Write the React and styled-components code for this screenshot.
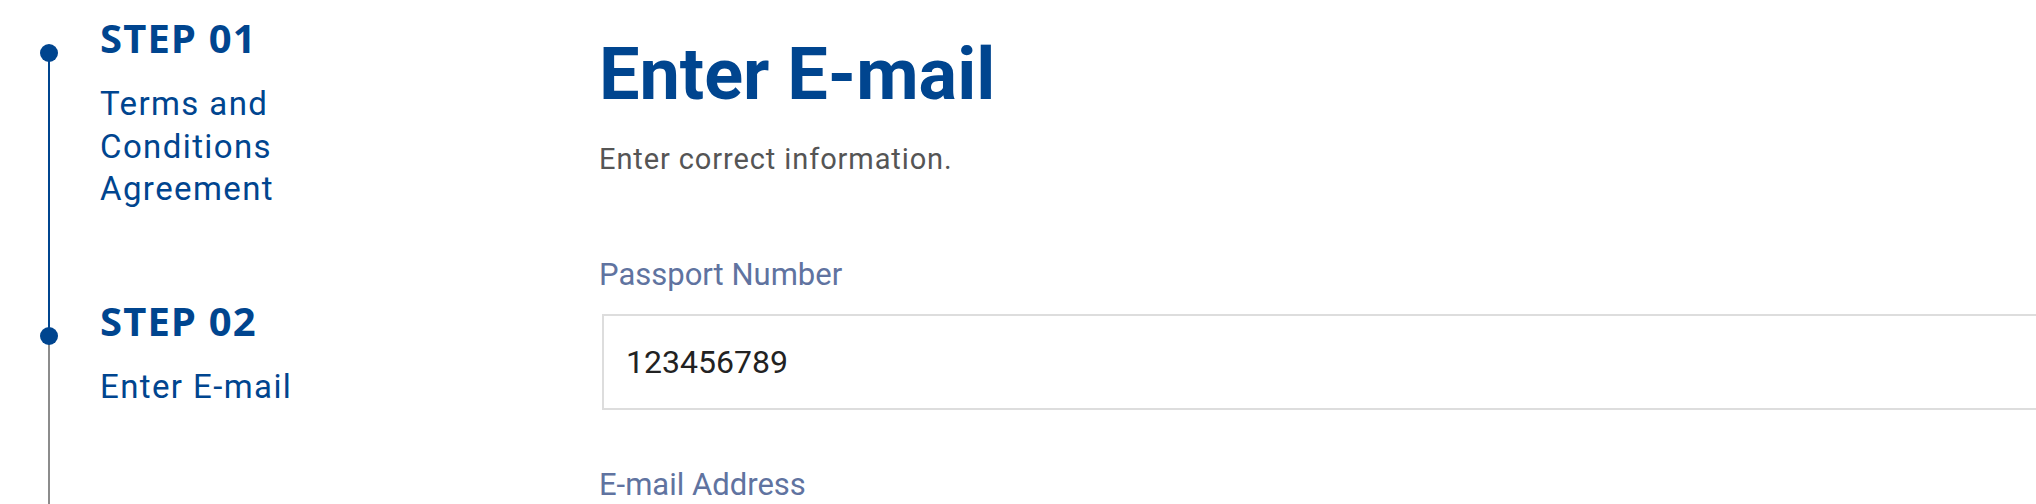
import styled, { createGlobalStyle } from "styled-components"

const steps = [
    { num: "01", title: "Terms and Conditions Agreement", state: "done" },
    { num: "02", title: "Enter E-mail", state: "current" },
    { num: "03", title: "Verification", state: "todo" },
]

const fields = [
    { label: "Passport Number", value: "123456789" },
    { label: "E-mail Address", value: "" },
]

const App = () => {
    return (
        <>
            <GlobalStyle />
            <Page>
                <Sidebar>
                    {steps.map((step, i) => (
                        <Step key={step.num} state={step.state} last={i === steps.length - 1}>
                            <Dot state={step.state} />
                            <StepNumber state={step.state}>STEP {step.num}</StepNumber>
                            <StepTitle state={step.state}>{step.title}</StepTitle>
                        </Step>
                    ))}
                </Sidebar>
                <Main>
                    <Title>Enter E-mail</Title>
                    <Lead>Enter correct information.</Lead>
                    <Form>
                        {fields.map((field) => (
                            <Field key={field.label}>
                                <Label>{field.label}</Label>
                                <Input defaultValue={field.value} />
                            </Field>
                        ))}
                    </Form>
                </Main>
            </Page>
        </>
    )
}

export default App

const GlobalStyle = createGlobalStyle`
    html, body {
        margin: 0;
        padding: 0;
        background: #fff;
        overflow: hidden;
    }
    body {
        font-family: Roboto, "Liberation Sans", sans-serif;
    }
`

const Page = styled.div`
    display: flex;
    width: max-content;
    height: 504px;
    overflow: hidden;
`

const Sidebar = styled.aside`
    width: 559px;
    padding: 18px 0 0 40px;
    display: flex;
    flex-direction: column;
`

// the rail between dots: drawn from this step's dot to the next one
const Step = styled.div`
    position: relative;
    padding-left: 60px;
    padding-bottom: 90px;

    &::before {
        content: "";
        position: absolute;
        left: 8px;
        top: 35px;
        width: 2px;
        height: 100%;
        background: ${({ state }) => (state === "done" ? "#00458f" : "#8c8c8c")};
        display: ${({ last }) => (last ? "none" : "block")};
    }
`

const Dot = styled.span`
    position: absolute;
    left: 0;
    top: 26px;
    width: 18px;
    height: 18px;
    border-radius: 50%;
    background: ${({ state }) => (state === "todo" ? "#bdbdbd" : "#00458f")};
    z-index: 1;
`

const StepNumber = styled.div`
    font-family: "Noto Sans", "Open Sans", sans-serif;
    font-weight: 700;
    font-size: 40px;
    line-height: 40px;
    letter-spacing: 1.2px;
    color: ${({ state }) => (state === "todo" ? "#bdbdbd" : "#00458f")};
`

const StepTitle = styled.div`
    margin-top: 25px;
    max-width: 240px;
    font-size: 33px;
    line-height: 42.5px;
    letter-spacing: 1.4px;
    color: ${({ state }) => (state === "todo" ? "#bdbdbd" : "#00458f")};
`

const Main = styled.main`
    width: 1600px;
    padding-top: 32px;
`

const Title = styled.h1`
    margin: 0;
    font-size: 72px;
    line-height: 86px;
    font-weight: 700;
    color: #00458f;
`

const Lead = styled.p`
    margin: 21px 0 0;
    font-size: 29px;
    line-height: 40px;
    letter-spacing: 0.9px;
    color: #555;
`

const Form = styled.div`
    margin-top: 75px;
    display: flex;
    flex-direction: column;
    gap: 54px;
`

const Field = styled.div`
    display: flex;
    flex-direction: column;
    gap: 18px;
`

const Label = styled.label`
    font-size: 31px;
    line-height: 42px;
    color: #6073a0;
`

const Input = styled.input`
    box-sizing: border-box;
    width: calc(100% - 3px);
    height: 96px;
    margin-left: 3px;
    padding: 0 22px;
    border: 2px solid #dddddd;
    border-radius: 0;
    outline: none;
    font-family: Roboto, "Liberation Sans", sans-serif;
    font-size: 32px;
    color: #222;
    background: #fff;
`
